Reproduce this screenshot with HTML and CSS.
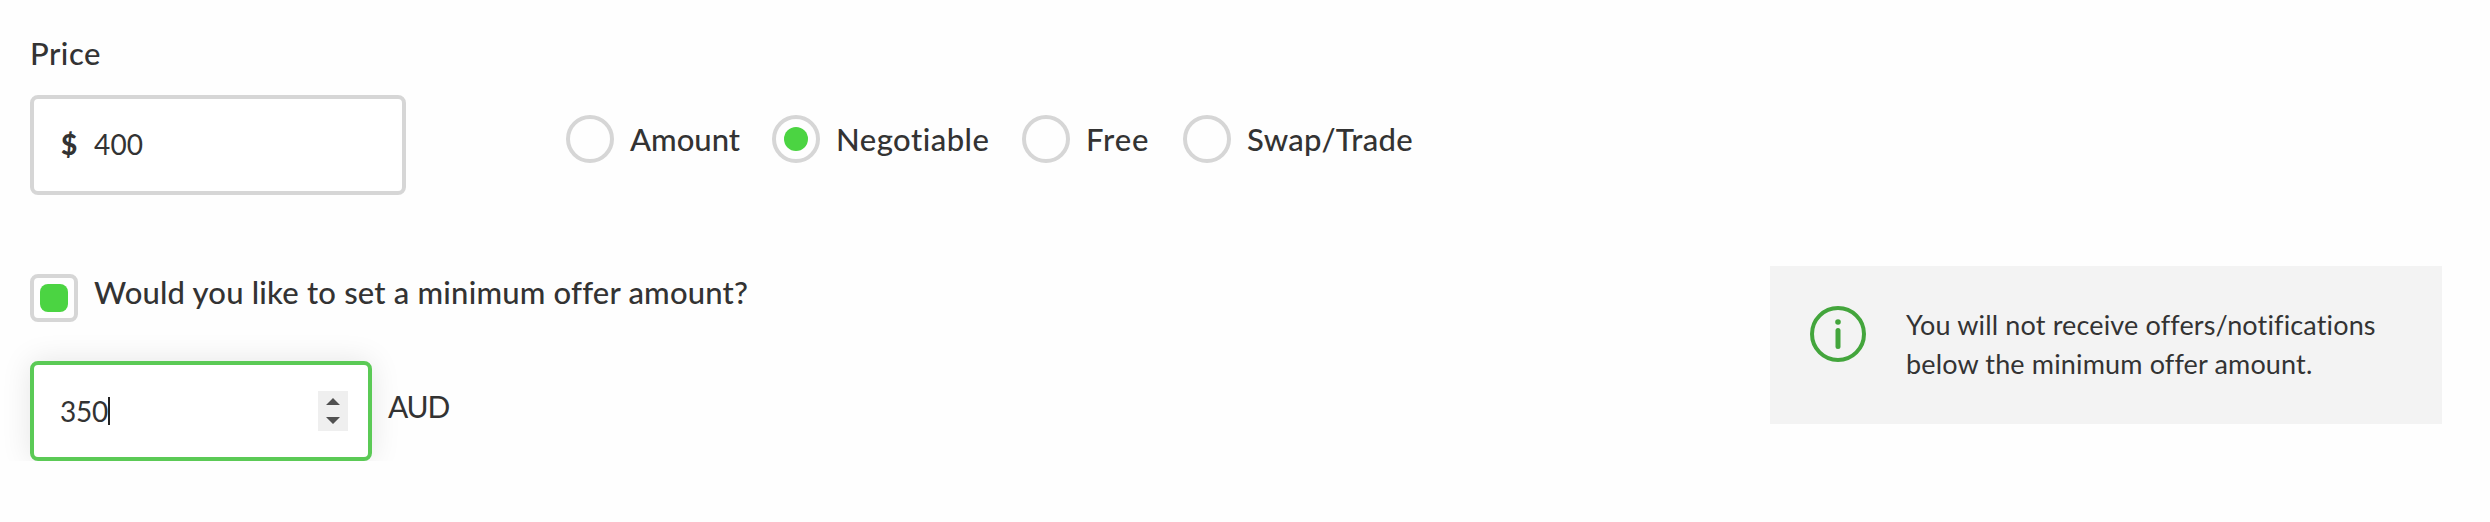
FILE: index.html
```html
<!DOCTYPE html>
<html lang="en">
<head>
    <meta charset="UTF-8">
    <meta name="viewport" content="width=device-width, initial-scale=1.0">
    <title>Price</title>
    <link rel="stylesheet" href="styles.css">
</head>
<body>
    <form class="price-form">
        <div class="price-label">Price</div>

        <div class="price-row">
            <div class="field price-field">
                <span class="currency">$</span>
                <span class="value">400</span>
            </div>
            <div class="options">
                <div class="option option-amount">
                    <span class="radio"></span>
                    <span class="option-text">Amount</span>
                </div>
                <div class="option option-negotiable">
                    <span class="radio checked"></span>
                    <span class="option-text">Negotiable</span>
                </div>
                <div class="option option-free">
                    <span class="radio"></span>
                    <span class="option-text">Free</span>
                </div>
                <div class="option option-swap">
                    <span class="radio"></span>
                    <span class="option-text">Swap/Trade</span>
                </div>
            </div>
        </div>

        <div class="minimum-row">
            <div class="minimum">
                <div class="minimum-toggle">
                    <span class="checkbox"></span>
                    <span class="minimum-question">Would you like to set a minimum offer amount?</span>
                </div>
                <div class="minimum-offer">
                    <div class="field offer-field focused">
                        <span class="value">350</span>
                        <span class="caret"></span>
                        <span class="spinner">
                            <svg width="30" height="40" viewBox="0 0 30 40">
                                <path d="M15 7l7 7H8zM15 33l-7-7h14z" fill="#505050"/>
                            </svg>
                        </span>
                    </div>
                    <span class="unit">AUD</span>
                </div>
            </div>

            <div class="info">
                <svg class="info-icon" width="56" height="56" viewBox="0 0 56 56" fill="none" stroke="#43a53c">
                    <circle cx="28" cy="28" r="26" stroke-width="4"/>
                    <path d="M28 24.5v16" stroke-width="5" stroke-linecap="round"/>
                    <circle cx="28" cy="16" r="2.8" fill="#43a53c" stroke="none"/>
                </svg>
                <p class="info-text">
                    You will not receive offers/notifications<br>
                    below the minimum offer amount.
                </p>
            </div>
        </div>
    </form>
</body>
</html>
```
FILE: styles.css
```css
* {
    margin: 0;
    padding: 0;
    box-sizing: border-box;
}

body {
    font-family: Lato, 'Open Sans', sans-serif;
    font-size: 31px;
    font-weight: 500;
    letter-spacing: 0.15px;
    color: #333;
    background: #fefefe;
}

.price-form {
    padding: 33px 48px 0 30px;
}

.price-label {
    height: 62px;
    line-height: 40px;
    letter-spacing: 0.5px;
}

.price-row {
    display: flex;
    height: 171px;
}

.field {
    display: flex;
    align-items: center;
    height: 100px;
    padding: 0 24px 0 27px;
    border: 4px solid #d6d6d6;
    border-radius: 8px;
    background: #fff;
    font-size: 28px;
    font-weight: 400;
}

.price-field {
    width: 376px;
    padding-bottom: 2px;
}

.currency {
    width: 33px;
    font-weight: 900;
}

.options {
    display: flex;
    margin: 20px 0 0 160px;
}

.option {
    display: flex;
    height: 48px;
    line-height: 48px;
    white-space: nowrap;
}

.option-amount {
    width: 206px;
    letter-spacing: 0;
}

.option-negotiable {
    width: 250px;
    letter-spacing: 0.5px;
}

.option-free {
    width: 161px;
    letter-spacing: 0.9px;
}

.option-swap {
    letter-spacing: 0.3px;
}

.radio {
    flex: none;
    display: flex;
    align-items: center;
    justify-content: center;
    width: 48px;
    height: 48px;
    margin-right: 16px;
    border: 4px solid #d6d6d6;
    border-radius: 50%;
}

.radio.checked::after {
    content: '';
    width: 24px;
    height: 24px;
    border-radius: 50%;
    background: #4bd442;
}

.minimum-row {
    display: flex;
    justify-content: space-between;
}

.minimum-toggle {
    display: flex;
    height: 95px;
    padding-top: 8px;
}

.checkbox {
    width: 48px;
    height: 48px;
    margin-right: 16px;
    padding: 6px;
    border: 4px solid #d6d6d6;
    border-radius: 8px;
}

.checkbox::after {
    content: '';
    display: block;
    width: 28px;
    height: 28px;
    border-radius: 8px;
    background: #4bd442;
}

.minimum-question {
    line-height: 36px;
    letter-spacing: 0.2px;
    white-space: nowrap;
}

.minimum-offer {
    display: flex;
}

.offer-field {
    width: 342px;
    padding: 0 20px 0 26px;
    letter-spacing: -0.3px;
}

.focused {
    border-color: #5bca56;
    box-shadow: 0 0 30px rgba(0, 0, 0, 0.1);
}

.caret {
    width: 2px;
    height: 28px;
    background: #222;
}

.spinner {
    width: 30px;
    height: 40px;
    margin-left: auto;
    background: #efefef;
}

.spinner svg {
    display: block;
}

.unit {
    margin-left: 16px;
    font-size: 30px;
    font-weight: 400;
    letter-spacing: -1.2px;
    line-height: 90px;
}

.info {
    display: flex;
    width: 672px;
    height: 158px;
    padding: 40px;
    background: #f3f3f3;
}

.info-icon {
    flex: none;
    margin-right: 40px;
}

.info-text {
    margin-top: -1px;
    font-size: 27px;
    font-weight: 400;
    line-height: 39px;
    white-space: nowrap;
}
```
